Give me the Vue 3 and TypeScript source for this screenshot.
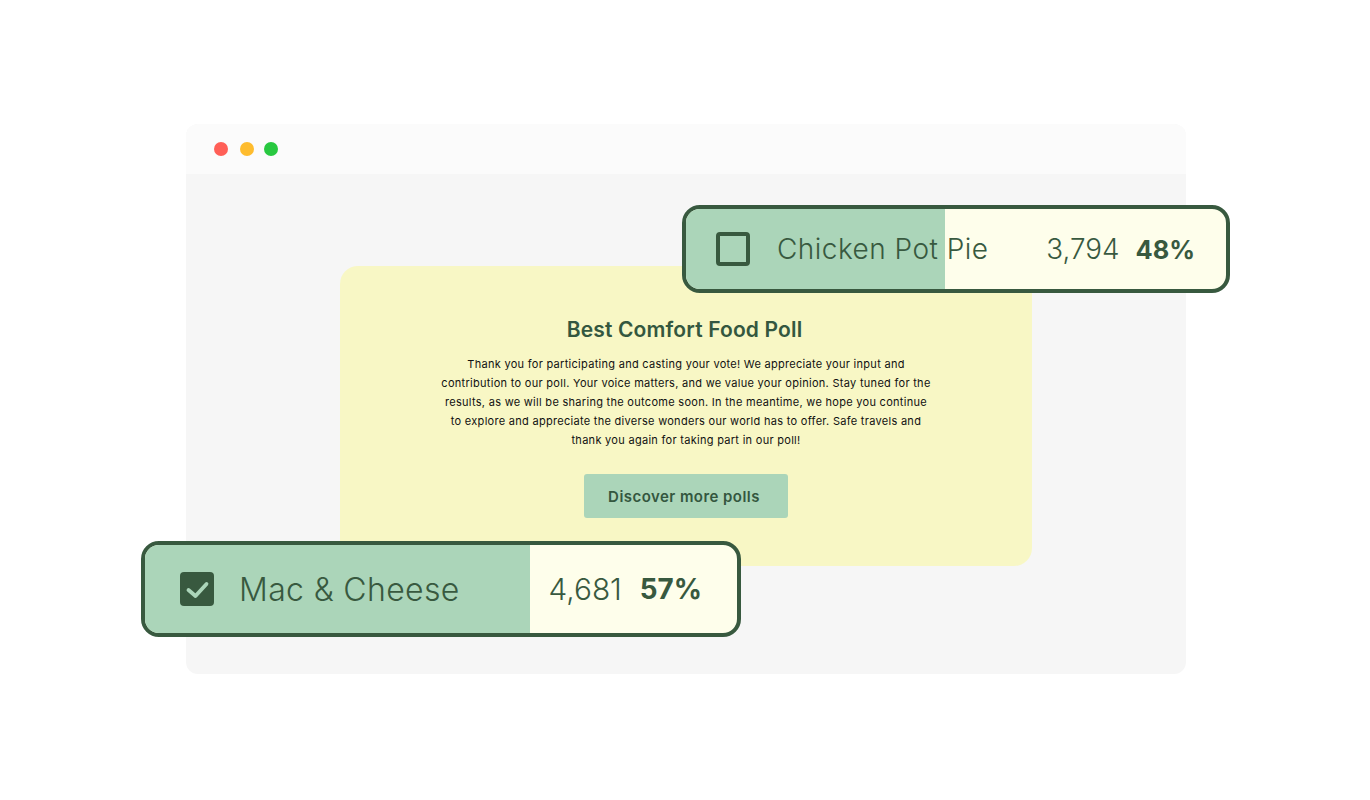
<script setup lang="ts">
interface PollRow {
  id: string
  label: string
  votes: string
  percent: string
  checked: boolean
}

const rows: PollRow[] = [
  { id: 'pie', label: 'Chicken Pot Pie', votes: '3,794', percent: '48%', checked: false },
  { id: 'mac', label: 'Mac & Cheese', votes: '4,681', percent: '57%', checked: true },
]

const dots = ['#ff5f57', '#febc2e', '#28c840']

const message = [
  'Thank you for participating and casting your vote! We appreciate your input and',
  'contribution to our poll. Your voice matters, and we value your opinion. Stay tuned for the',
  'results, as we will be sharing the outcome soon. In the meantime, we hope you continue',
  'to explore and appreciate the diverse wonders our world has to offer. Safe travels and',
  'thank you again for taking part in our poll!',
]
</script>

<template>
  <div class="page">
    <div class="window">
      <div class="titlebar">
        <span v-for="c in dots" :key="c" class="dot" :style="{ background: c }" />
      </div>
      <div class="body">
        <section class="card">
          <h1 class="title">Best Comfort Food Poll</h1>
          <p class="message">
            <span v-for="line in message" :key="line" class="line">{{ line }}</span>
          </p>
          <button class="more">Discover more polls</button>
        </section>
      </div>

      <div v-for="row in rows" :key="row.id" class="row" :class="`row-${row.id}`">
        <div class="fill" />
        <span class="box" :class="{ on: row.checked }">
          <svg v-if="row.checked" viewBox="0 0 34 34" width="34" height="34">
            <path d="M8.5 18 L15.5 24 L26.5 12" fill="none" stroke="#abd5b9" stroke-width="3.8" stroke-linecap="round" stroke-linejoin="round" />
          </svg>
        </span>
        <span class="label">{{ row.label }}</span>
        <span class="votes">{{ row.votes }}</span>
        <span class="percent">{{ row.percent }}</span>
      </div>
    </div>
  </div>
</template>

<style>
html, body { background: #fff; }
</style>

<style scoped>
.page {
  height: 800px;
  padding: 124px 0 0 186px;
  box-sizing: border-box;
  font-family: Inter, "Liberation Sans", sans-serif;
  overflow: hidden;
}
.window {
  position: relative;
  width: 1000px;
  height: 550px;
  border-radius: 12px;
  background: #f6f6f6;
}
.titlebar {
  height: 50px;
  display: flex;
  align-items: center;
  gap: 10px;
  padding-left: 28px;
  background: #fbfbfb;
  border-radius: 12px 12px 0 0;
}
.dot {
  width: 14px;
  height: 14px;
  border-radius: 50%;
}
.dot:first-child { margin-right: 2px; }
.body {
  display: flex;
  justify-content: center;
  padding-top: 92px;
}
.card {
  width: 692px;
  height: 300px;
  box-sizing: border-box;
  padding-top: 51px;
  border-radius: 18px;
  background: #f8f7c5;
  display: flex;
  flex-direction: column;
  align-items: center;
}
.title {
  margin: 0 0 0 -3px;
  font-size: 21px;
  line-height: 26px;
  font-weight: 600;
  letter-spacing: 0.15px;
  color: #34573f;
  white-space: nowrap;
}
.message {
  margin: 12px 0 0;
  font-size: 11px;
  line-height: 19px;
  color: #111;
  text-align: center;
  letter-spacing: 0.29px;
}
.line {
  display: block;
  white-space: nowrap;
}
.more {
  margin-top: 24px;
  width: 204px;
  height: 44px;
  padding: 0 4px 0 0;
  border: 0;
  border-radius: 3px;
  background: #abd5b9;
  color: #34573f;
  font: 600 15px Inter, "Liberation Sans", sans-serif;
  letter-spacing: 0.45px;
}
.row {
  position: absolute;
  display: flex;
  align-items: center;
  box-sizing: border-box;
  border: 4px solid #38593f;
  border-radius: 18px;
  background: #fefeeb;
  color: #38593f;
  overflow: hidden;
}
.row-pie {
  left: 496px;
  top: 81px;
  width: 548px;
  height: 88px;
  padding-left: 30px;
}
.row-mac {
  left: -45px;
  top: 417px;
  width: 600px;
  height: 96px;
  padding-left: 35px;
}
.fill {
  position: absolute;
  left: 0;
  top: 0;
  bottom: 0;
  background: #abd5b9;
}
.row-pie .fill { width: 259px; }
.row-mac .fill { width: 385px; }
.box {
  position: relative;
  flex: none;
  box-sizing: border-box;
  width: 34px;
  height: 34px;
  border: 4px solid #38593f;
  border-radius: 4px;
}
.box.on {
  border: 0;
  background: #38593f;
}
.box svg { display: block; }
.label,
.votes,
.percent {
  position: relative;
  white-space: nowrap;
}
.label,
.votes { font-weight: 300; }
.percent { font-weight: 700; }
.row-pie .label {
  margin-left: 27px;
  font-size: 28px;
  letter-spacing: 0.47px;
}
.row-mac .label {
  margin-left: 25px;
  font-size: 32px;
  letter-spacing: 0.35px;
}
.votes { margin-left: auto; }
.row-pie .votes { font-size: 27.8px; }
.row-mac .votes { font-size: 29.8px; }
.row-pie .percent {
  margin: 0 31px 0 16px;
  font-size: 25.4px;
}
.row-mac .percent {
  margin: 0 35px 0 18px;
  font-size: 27.8px;
}
</style>
